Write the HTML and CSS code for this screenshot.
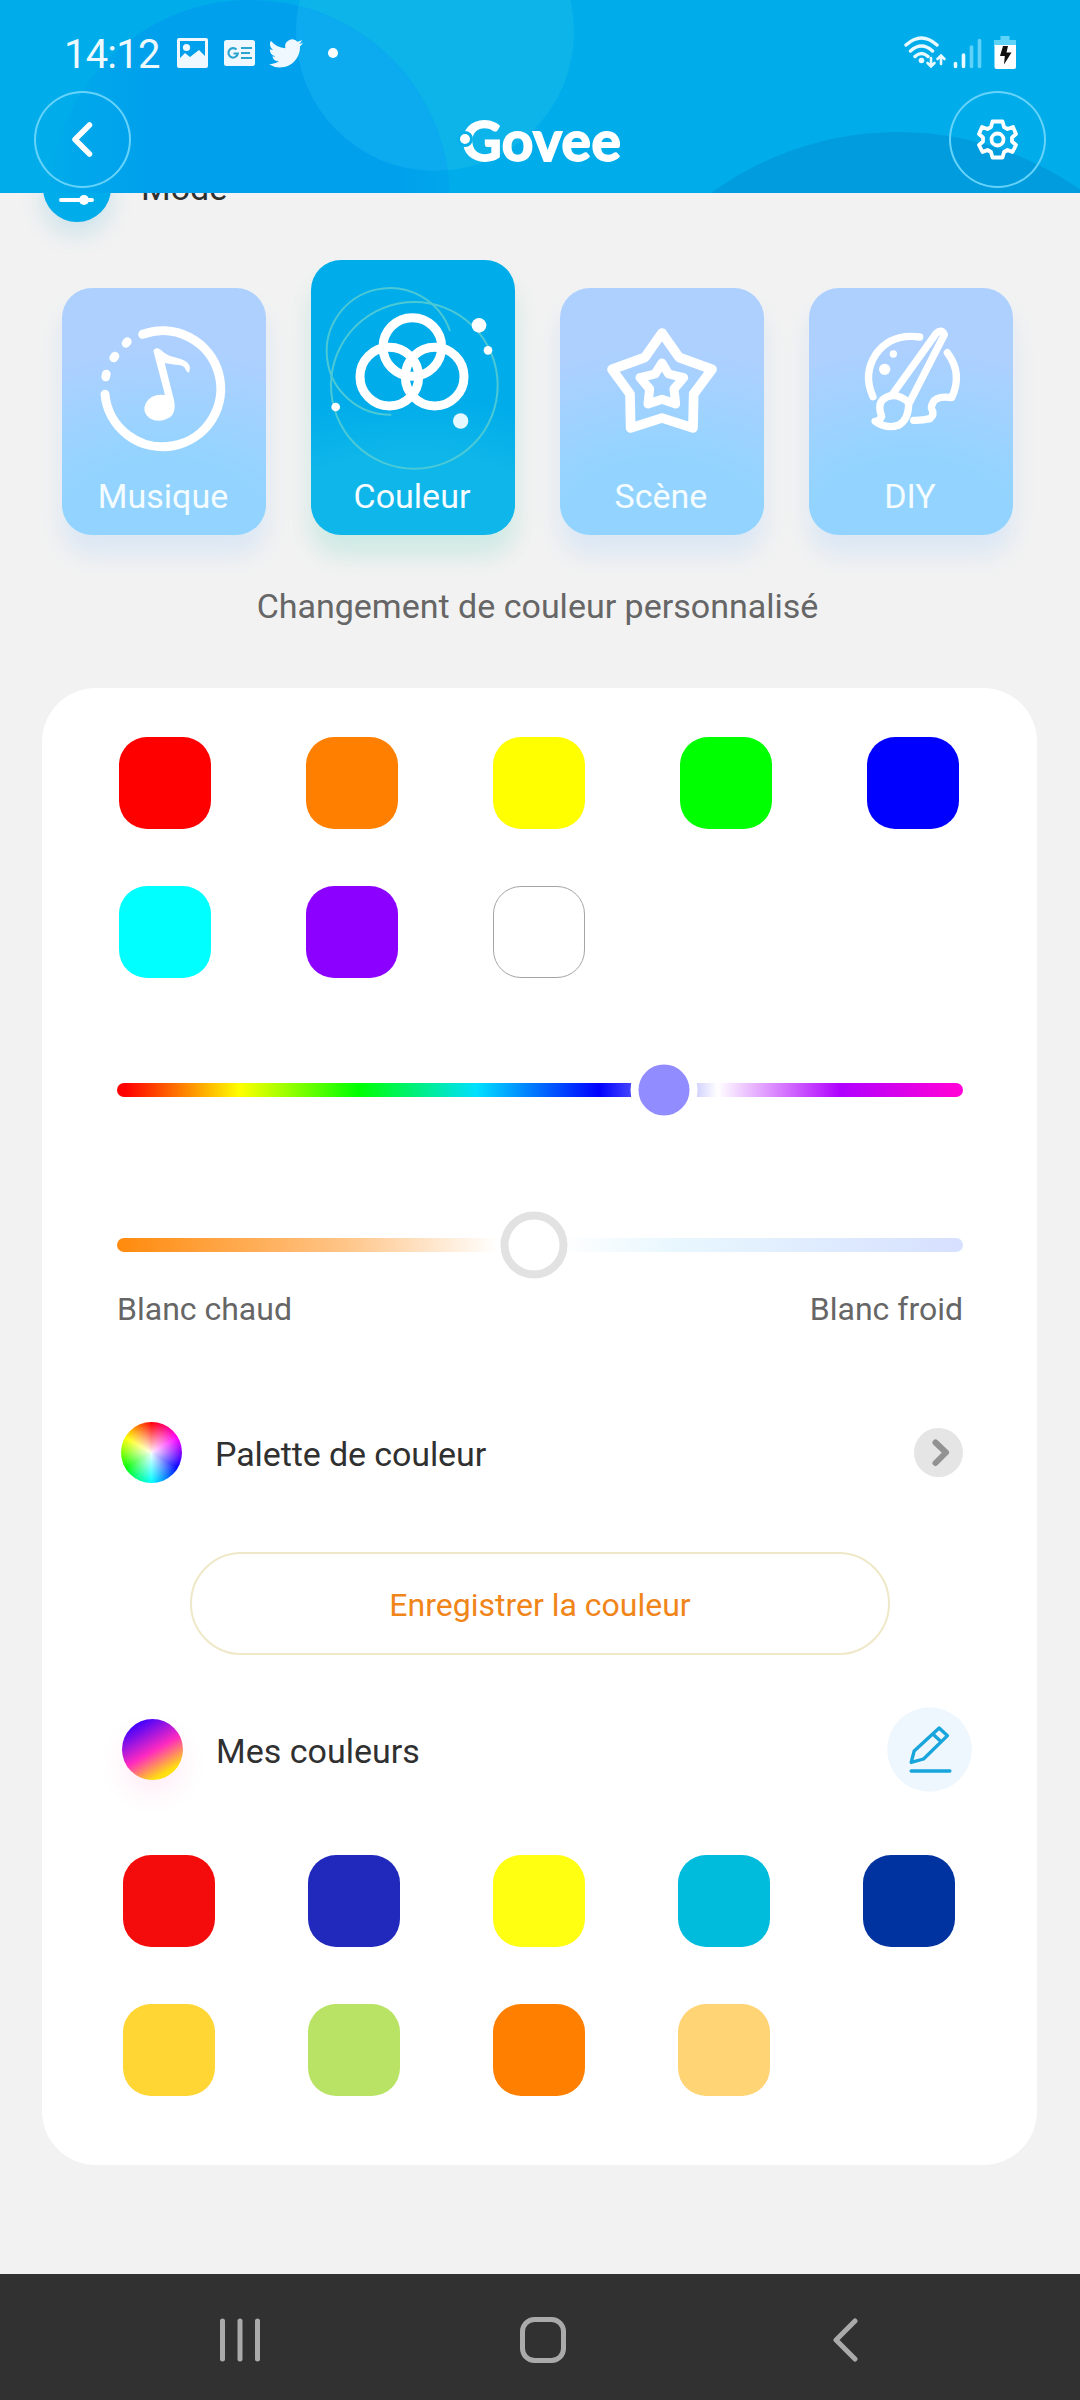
FILE: index.html
```
<!DOCTYPE html>
<html lang="fr">
  <head>
    <meta charset="utf-8" />
    <title>Govee</title>
    <link rel="stylesheet" href="styles.css">
  </head>

  <body>
    <header class="header">
      <svg class="header-bg" width="1080" height="193" viewBox="0 0 1080 193">
        <defs>
          <linearGradient id="deep" x1="0" y1="0" x2="1" y2="0">
            <stop offset="0" stop-color="#00a0ec" stop-opacity="0.1" />
            <stop offset="0.25" stop-color="#00a0ec" />
            <stop offset="0.85" stop-color="#00a0ec" />
            <stop offset="1" stop-color="#00a6eb" />
          </linearGradient>
        </defs>
        <rect width="1080" height="193" fill="#00acea" />
        <circle cx="435" cy="32" r="139" fill="#0cb4e9" />
        <circle cx="250" cy="200" r="200" fill="url(#deep)" />
        <clipPath id="clip"><circle cx="435" cy="32" r="139" /></clipPath>
        <circle cx="250" cy="200" r="200" fill="#0cabf0" clip-path="url(#clip)" />
        <circle cx="898" cy="449" r="317" fill="#009cdd" />
      </svg>

      <!-- Status bar -->
      <div class="status-bar">
        <div class="status-left">
          <span class="time">14:12</span>
          <svg width="31" height="30" viewBox="0 0 31 30">
            <path fill="#eef8fe" fill-rule="evenodd" d="M2 0h27a2 2 0 0 1 2 2v26a2 2 0 0 1-2 2H2a2 2 0 0 1-2-2V2a2 2 0 0 1 2-2zM3 3v17l5-5 5 4 9-7 6 6V3z" />
            <circle cx="9.500" cy="9.500" r="3.600" fill="#eef8fe" />
          </svg>
          <svg class="news" width="31" height="26" viewBox="0 0 31 26">
            <rect width="31" height="26" rx="2.500" fill="#eef8fe" />
            <path d="M12.500 9.500a4.700 4.700 0 1 0 1.300 4h-4.300M17 8h11M17 13h9M17 18h11" fill="none" stroke="#2ba4d0" stroke-width="2.200" />
          </svg>
          <svg class="bird" width="34" height="30" viewBox="0 2 23.600 20">
            <path fill="#eef8fe" d="M23.600 4.900a9.600 9.600 0 0 1-2.800.8 4.900 4.900 0 0 0 2.100-2.700 9.700 9.700 0 0 1-3.100 1.200 4.900 4.900 0 0 0-8.400 4.500A13.900 13.900 0 0 1 1.300 3.500a4.900 4.900 0 0 0 1.500 6.500 4.800 4.800 0 0 1-2.200-.6 4.900 4.900 0 0 0 3.900 4.900 4.900 4.900 0 0 1-2.200.1 4.900 4.900 0 0 0 4.600 3.400A9.800 9.800 0 0 1 0 19.800a13.900 13.900 0 0 0 7.500 2.200c9.100 0 14.300-7.700 14-14.600a10 10 0 0 0 2.100-2.500z" />
          </svg>
          <span class="more-dot"></span>
        </div>
        <div class="status-right">
          <svg width="114" height="36" viewBox="903 35 114 36">
            <g fill="none" stroke="#e8faff" stroke-width="3.400" stroke-linecap="round">
              <path d="M906 45q15.500-14 31 0M910.500 51q11-10 22 0M915 56.500q6.500-6 13 0" />
              <path d="M931 58v8M927.500 63l3.500 3.500 3.500-3.500M941 64v-8M937.500 59l3.500-3.500 3.500 3.500" stroke-width="2.600" />
            </g>
            <circle cx="921.500" cy="60.500" r="2.800" fill="#e8faff" />
            <g stroke-width="3.600" stroke-linecap="round">
              <path d="M955.500 63.500v3M963.500 55v11.500" stroke="#e8faff" />
              <path d="M971.500 47v19.500M979.500 40.500v26" stroke="#5fd2f8" />
            </g>
            <path d="M1000.500 36h9v4h6.500v6h-22v-6h6.500z" fill="#5fd2f8" />
            <path d="M994.500 45h21.500v22a2 2 0 0 1-2 2h-17.500a2 2 0 0 1-2-2z" fill="#fff" />
            <path d="M1003 46h5l-1.500 6.500h5l-7.500 12 .8-8.500h-4.800z" fill="#111" />
          </svg>
        </div>
      </div>

      <!-- Title bar -->
      <div class="title-bar">
        <div class="round-button">
          <svg width="97" height="97" viewBox="0 0 97 97">
            <path d="M55.500 34L41 48.500 55.500 63" fill="none" stroke="#fff" stroke-width="5.500" stroke-linecap="round" stroke-linejoin="round" />
          </svg>
        </div>
        <div class="logo">
          <span class="logo-dot"></span>
          <span>Govee</span>
        </div>
        <div class="round-button">
          <svg width="97" height="97" viewBox="-48.500 -48.500 97 97">
            <g fill="none" stroke="#fff" stroke-width="3.800" stroke-linejoin="round">
              <path d="M-5 -18H5L6.500-12.500 10-10.500 15.500-12.500 18.500-5.500 14.500-2V2L18.500 5.500 15 12.500 10 10.500 6.500 12.500 5 18H-5L-6.500 12.500-10 10.500-15 12.500-18.500 5.500-14.500 2V-2L-18.500-5.500-15.500-12.500-10-10.500-6.500-12.500z" />
              <circle r="6" />
            </g>
          </svg>
        </div>
      </div>
    </header>

    <main class="content">
      <div class="mode-title">
        <span class="mode-icon">
          <svg width="68" height="68" viewBox="0 0 68 68">
            <path d="M18 46h31M18 30h31" stroke="#fff" stroke-width="4" stroke-linecap="round" />
            <circle cx="41" cy="46" r="5" fill="#fff" />
          </svg>
        </span>
        <span>Mode</span>
      </div>

      <div class="modes">
        <div class="mode">
          <svg width="204" height="188" viewBox="65 145 612 564">
            <g fill="none" stroke="#fff" stroke-width="27" stroke-linecap="round">
              <path d="M307 284A174 174 0 1 1 194 464" />
              <path d="M257 311l4-5M220 355l4-6M196 412l2-9" stroke-width="26" />
            </g>
            <path d="M339 333q7-12 20-4 12 12 28 19l34 10q24 8 28 24l-2 16q-7 2-14-14-6-9-28-9l-32-5 28 111q8 43-18 55-29 15-55 0-26-20-10-48 16-27 56-22z" fill="#fff" />
          </svg>
          <span>Musique</span>
        </div>
        <div class="mode active">
          <svg width="204" height="216" viewBox="813 60 612 648">
            <g fill="none" stroke="#4cc9d6" stroke-width="6">
              <circle cx="1123" cy="436" r="250" />
              <path d="M1054 524A190 190 0 1 1 1230 273" />
            </g>
            <g fill="none" stroke="#fff" stroke-width="27">
              <circle cx="1117" cy="321" r="88" />
              <circle cx="1048" cy="410" r="88" />
              <circle cx="1184" cy="410" r="88" />
            </g>
            <g fill="#fff">
              <circle cx="1317" cy="256" r="22" />
              <circle cx="1344" cy="331" r="13" />
              <circle cx="887" cy="501" r="13" />
              <circle cx="1262" cy="543" r="23" fill="#e4f8ff" />
            </g>
          </svg>
          <span>Couleur</span>
        </div>
        <div class="mode">
          <svg width="204" height="188" viewBox="60 145 612 564">
            <g fill="none" stroke="#fff" stroke-linejoin="round">
              <path d="M366 280L417 353 516 389 461 463 459 565 366 535 272 565 270 463 216 389 315 353z" stroke-width="29" />
              <path d="M366 370L386 403 431 414 402 448 407 493 366 479 324 493 329 448 300 414 345 403z" stroke-width="27" />
            </g>
          </svg>
          <span>Scène</span>
        </div>
        <div class="mode">
          <svg width="204" height="188" viewBox="807 145 612 564">
            <g fill="none" stroke="#fff" stroke-width="22" stroke-linecap="round" stroke-linejoin="round">
              <path d="M1139 292Q1054 280 1008 343 968 404 999 471M1222 339Q1269 401 1235 474 1177 465 1174 505 1185 525 1170 537 1145 543 1121 542" />
              <path d="M1059 462L1188 282Q1205 266 1213 285L1109 488" />
              <path d="M1106 488Q1063 452 1029 479 1012 495 1025 530 1019 545 1005 545 1040 570 1077 556 1107 538 1106 488z" />
            </g>
            <circle cx="1060" cy="343" r="11" fill="#fff" />
            <circle cx="1034" cy="389" r="17" fill="#fff" />
          </svg>
          <span>DIY</span>
        </div>
      </div>

      <p class="subtitle">Changement de couleur personnalisé</p>

      <section class="panel">
        <div class="swatches">
          <span style="background: #ff0000"></span>
          <span style="background: #ff8000"></span>
          <span style="background: #ffff00"></span>
          <span style="background: #00ff00"></span>
          <span style="background: #0000ff"></span>
          <span style="background: #00ffff"></span>
          <span style="background: #8b00ff"></span>
          <span class="white"></span>
        </div>

        <!-- Sliders -->
        <div class="slider hue"><span class="thumb" style="left: 547px"></span></div>
        <div class="slider warmth"><span class="thumb" style="left: 417px"></span></div>
        <div class="slider-labels">
          <span>Blanc chaud</span>
          <span>Blanc froid</span>
        </div>

        <div class="row palette">
          <span class="wheel"></span>
          <span class="row-label">Palette de couleur</span>
          <svg width="49" height="49" viewBox="0 0 49 49">
            <circle cx="24.500" cy="24.500" r="24.500" fill="#e5e5e5" />
            <path d="M21.500 14.500L32 24.500 21.500 35" fill="none" stroke="#929292" stroke-width="6" stroke-linecap="round" stroke-linejoin="round" />
          </svg>
        </div>

        <button type="button" class="save">Enregistrer la couleur</button>

        <div class="row mine">
          <span class="ball"></span>
          <span class="row-label">Mes couleurs</span>
          <svg width="85" height="85" viewBox="979 952 254 255">
            <circle cx="1106" cy="1079.500" r="127" fill="#eff7fe" />
            <g fill="none" stroke="#17a5dc" stroke-width="10" stroke-linejoin="round">
              <path d="M1051 1118L1060 1084 1135 1015 1160 1038 1088 1108zM1116 1033L1141 1056" />
              <path d="M1051 1144H1167" stroke-linecap="round" />
            </g>
          </svg>
        </div>

        <div class="swatches saved">
          <span style="background: #f40c0c"></span>
          <span style="background: #2129bd"></span>
          <span style="background: #ffff12"></span>
          <span style="background: #00bcdc"></span>
          <span style="background: #0033a0"></span>
          <span style="background: #ffd633"></span>
          <span style="background: #b9e364"></span>
          <span style="background: #ff8000"></span>
          <span style="background: #ffd475"></span>
        </div>
      </section>
    </main>

    <!-- Android navigation -->
    <nav class="nav">
      <svg width="40" height="48" viewBox="0 0 40 48">
        <path d="M2.500 5v38M20 5v38M37.500 5v38" stroke="#aaa" stroke-width="5" stroke-linecap="round" />
      </svg>
      <svg class="home" width="46" height="48" viewBox="0 0 46 48">
        <rect x="2.500" y="3.500" width="41" height="41" rx="12" fill="none" stroke="#aaa" stroke-width="5" />
      </svg>
      <svg width="26" height="48" viewBox="0 0 26 48">
        <path d="M23 5L4 24l19 19" fill="none" stroke="#aaa" stroke-width="5" stroke-linecap="round" stroke-linejoin="round" />
      </svg>
    </nav>
  </body>
</html>
```

FILE: styles.css
```
* {
  box-sizing: border-box;
}
body {
  margin: 0;
  width: 1080px;
  height: 2400px;
  display: flex;
  flex-direction: column;
  background-color: #f2f2f2;
  font-family: Roboto, sans-serif;
  font-size: 34px;
  line-height: 40px;
  color: #303030;
  overflow: hidden;
}
svg {
  display: block;
  flex: none;
}

/* Header */
.header {
  position: relative;
  z-index: 1;
  height: 193px;
  flex: none;
}
.header-bg {
  position: absolute;
  top: 0;
  left: 0;
  z-index: -1;
}
.status-bar {
  display: flex;
  justify-content: space-between;
  height: 91px;
  padding: 35px 63px 0 64px;
}
.status-left {
  display: flex;
  align-items: center;
  height: 36px;
}
.time {
  width: 113px;
  padding-top: 3px;
  font-size: 40px;
  color: #eef9fe;
  letter-spacing: -0.8px;
}
.news {
  margin-left: 16px;
}
.bird {
  margin-left: 14px;
}
.more-dot {
  width: 10px;
  height: 10px;
  margin-left: 25px;
  border-radius: 50%;
  background-color: #fff;
}
.title-bar {
  display: flex;
  justify-content: space-between;
  padding: 0 34px;
}
.round-button {
  width: 97px;
  height: 97px;
  border-radius: 50%;
  box-shadow: inset 0 0 0 2px #66d4fa;
}
.logo {
  position: relative;
  display: flex;
  align-items: center;
  height: 97px;
  padding: 1px 0 0 3px;
  font-family: Lato, sans-serif;
  font-weight: 700;
  font-size: 55px;
  letter-spacing: 0.5px;
  color: #fff;
  -webkit-text-stroke: 1.8px #fff;
}
/* dot that breaks the left side of the G */
.logo-dot {
  position: absolute;
  top: 40px;
  left: -2px;
  width: 16px;
  height: 16px;
  border: 3px solid #07b0ea;
  border-radius: 50%;
  background-color: #fff;
}

/* Mode cards */
.content {
  flex: 1;
}
.mode-title {
  display: flex;
  align-items: center;
  gap: 30px;
  height: 68px;
  margin: -39px 0 38px 43px;
}
.mode-icon {
  width: 68px;
  height: 68px;
  border-radius: 50%;
  background-color: #00acea;
  box-shadow: 0 12px 24px rgba(0, 150, 200, 0.16);
}
.modes {
  display: flex;
  align-items: flex-end;
  gap: 45px;
  padding-left: 61.500px;
}
.mode {
  width: 204px;
  padding-bottom: 19px;
  border-radius: 30px;
  background: radial-gradient(ellipse 130% 75% at 50% 100%, #92d4ff 40%, #add0ff 100%);
  box-shadow: 0 20px 25px rgba(130, 190, 255, 0.2);
  color: #f4fcff;
  text-align: center;
}
.mode span {
  display: block;
  padding-right: 1px;
}
.mode.active {
  background: radial-gradient(ellipse 120% 50% at 50% 100%, #0eb6e9 60%, #00acea 100%);
  box-shadow: 0 20px 25px rgba(60, 200, 170, 0.2);
}
.subtitle {
  margin: 51px 0 62px;
  padding-right: 5px;
  text-align: center;
  color: #666;
}

/* Main panel */
.panel {
  display: flex;
  flex-direction: column;
  width: 995px;
  height: 1477px;
  margin-left: 42px;
  padding: 49px 74px 69px 75px;
  border-radius: 54px;
  background-color: #fff;
}
.swatches {
  display: grid;
  grid-template-columns: repeat(5, 92px);
  gap: 57px 95px;
  margin-left: 2px;
}
.swatches span {
  height: 92px;
  border-radius: 28px;
}
.swatches .white {
  border: 1px solid #a5a5a5;
}
.saved {
  gap: 57px 93px;
  margin: 63px 0 0 6px;
}
.slider {
  position: relative;
  height: 14px;
  flex: none;
  border-radius: 7px;
}
.hue {
  margin-top: 105px;
  background: linear-gradient(90deg, #ff0000 1%, #ffff00 14.5%, #00ff00 28.500%, #00e0ff 42.500%, #0000ff 57%, #ffffff 71%, #b000ff 85.500%, #ff00d8 99%);
}
.warmth {
  margin-top: 141px;
  background: linear-gradient(90deg, #ff8a0c, #ffc588 27%, #ffffff 45%, #ffffff 52%, #e8f7fe 66%, #d6e0ff);
}
.thumb {
  position: absolute;
  top: 50%;
  width: 67px;
  height: 67px;
  border: 8px solid #fff;
  border-radius: 50%;
  background-color: #918cff;
  transform: translate(-50%, -50%);
}
.warmth .thumb {
  border-color: #e2e2e2;
  background-color: #fff;
}
.slider-labels {
  display: flex;
  justify-content: space-between;
  margin-top: 38px;
  font-size: 32px;
  line-height: 38px;
  color: #666;
}
.row {
  display: flex;
  align-items: center;
  gap: 33px;
}
.row-label {
  flex: 1;
  padding-top: 3px;
}
.palette {
  height: 61px;
  margin: 94px 0 0 4px;
}
.palette .row-label {
  letter-spacing: -0.1px;
}
.wheel {
  width: 61px;
  height: 61px;
  border-radius: 50%;
  background:
    radial-gradient(circle, rgba(255, 255, 255, 0.95), rgba(255, 255, 255, 0) 70%),
    conic-gradient(#ff0000, #ff00ff 60deg, #0000ff 120deg, #00ffff 180deg, #00ff00 240deg, #ffff00 300deg, #ff0000);
}
.save {
  width: 700px;
  height: 103px;
  margin: 69px 0 0 73px;
  padding: 3px 0 0;
  border: 2px solid #efe8c8;
  border-radius: 52px;
  background: none;
  font: 32px/38px Roboto, sans-serif;
  color: #f08519;
}
.mine {
  height: 85px;
  margin: 52px -9px 0 5px;
}
.ball {
  width: 61px;
  height: 61px;
  border-radius: 50%;
  background: linear-gradient(150deg, #3a00ff 12%, #ff2ac0 52%, #ffdf10 82%);
  box-shadow: 0 14px 26px rgba(255, 60, 160, 0.09);
}

/* Bottom bar */
.nav {
  display: flex;
  justify-content: space-between;
  height: 126px;
  flex: none;
  padding: 42px 222px 0 220px;
  background-color: #313131;
}
.home {
  margin-right: 7px;
}
```
